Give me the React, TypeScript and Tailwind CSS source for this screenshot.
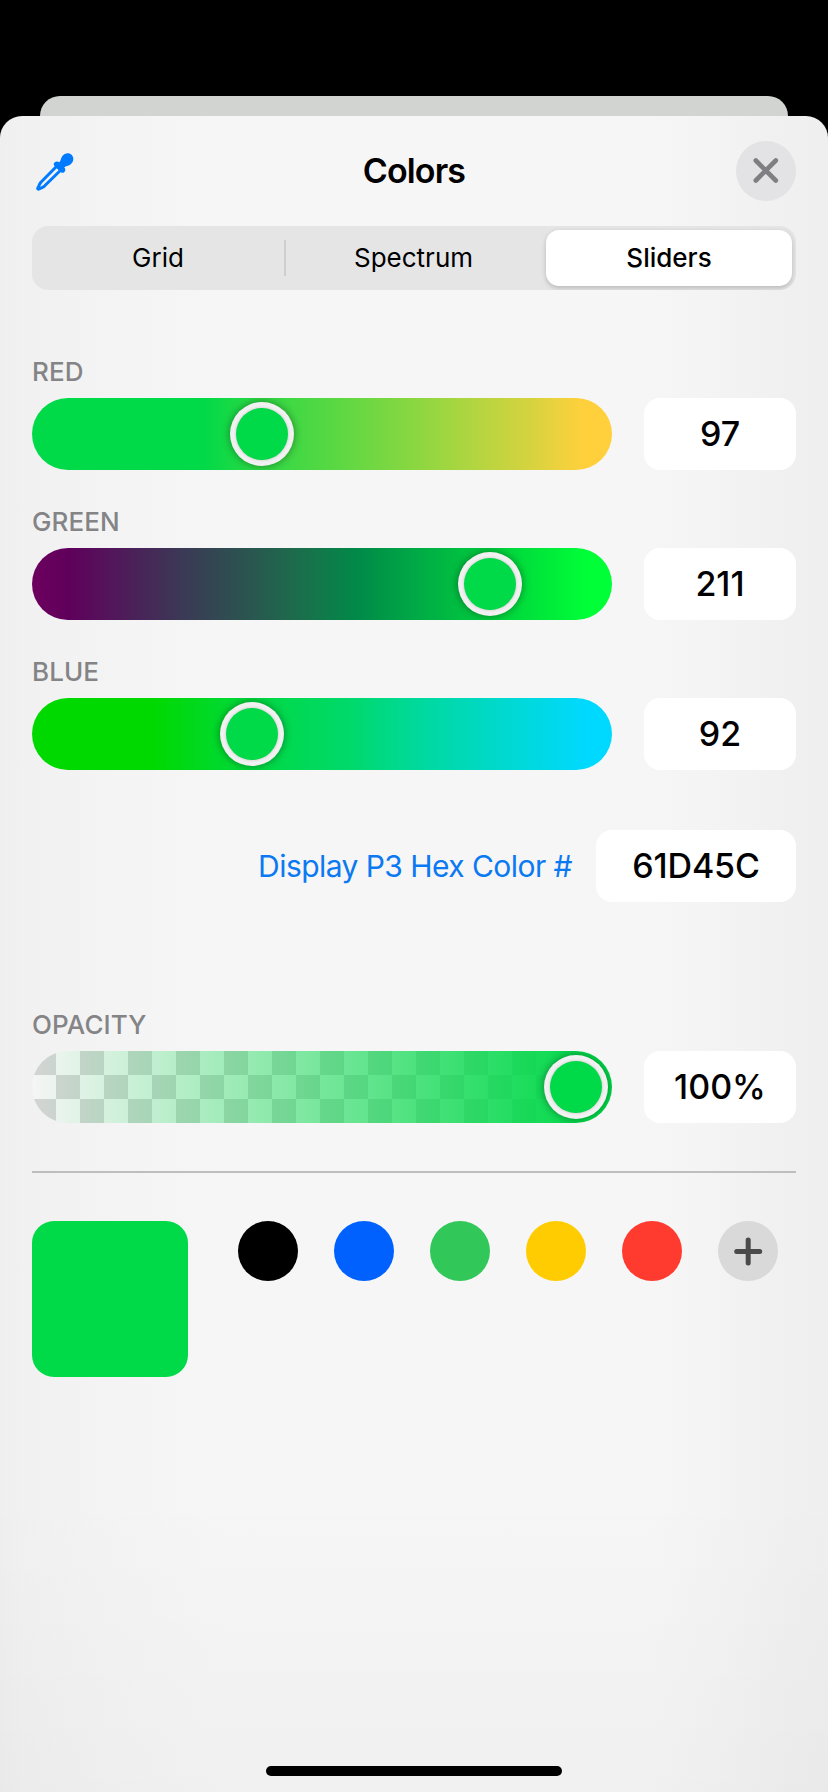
import type { ReactNode } from "react";

const swatches = ["bg-black", "bg-[#0061fe]", "bg-[#32c759]", "bg-[#ffcc02]", "bg-[#ff3b30]"];

function Label({ children }: { children: ReactNode }) {
  return <div className="h-[46px] pt-[4px] text-[26px] leading-[32px] font-medium tracking-[0.1px] text-[#848487]">{children}</div>;
}

function Value({ children }: { children: ReactNode }) {
  return (
    <div className="flex h-[72px] w-[152px] items-center justify-center rounded-[16px] bg-white text-[34px] leading-[40px] font-[450]">
      {children}
    </div>
  );
}

function Thumb({ left }: { left: number }) {
  return (
    <div
      className="absolute top-[4px] size-[64px] rounded-full bg-[#f1f1f1] p-[6px] shadow-[0_0_8px_rgba(0,0,0,0.4)]"
      style={{ left }}
    >
      <div className="size-full rounded-full bg-[#00d948] shadow-[0_0_3px_rgba(0,0,0,0.2)]" />
    </div>
  );
}

function ChannelRow({ label, track, thumb, value }: { label: string; track: string; thumb: number; value: ReactNode }) {
  return (
    <section>
      <Label>{label}</Label>
      <div className="flex justify-between">
        <div className={"relative h-[72px] w-[580px] overflow-hidden rounded-full " + track}>
          <Thumb left={thumb} />
        </div>
        <Value>{value}</Value>
      </div>
    </section>
  );
}

function Eyedropper() {
  return (
    <svg width="38" height="38" viewBox="0 0 38 38" fill="#007aff">
      <path d="M20.200 13.800 4.900 29.200C3.200 31.200 3.200 32.600 1.900 34.800c-.6.9.3 1.600 1.100 1.200 2.200-1.400 3.600-1.400 5.700-3.200L24.100 17.700" fill="none" stroke="#007aff" strokeWidth="3" strokeLinejoin="round" />
      <path d="M18.500 9.400c1.400-1.400 3.400-1.300 4.700-.1C24.800 8 24.700 5.600 26.200 3.200 28.800-.600 33.500-.600 35.600 1.800c2.500 2.500 2.400 7.200-1.200 9.600-2.400 1.600-4.600 1.400-6.100 2.800 1.200 1.300 1.500 3.300.1 4.700-1.200 1.200-3 1.100-4.200-.1l-5.500-5.500c-1.200-1.200-1.400-2.700-.2-3.900Z" />
    </svg>
  );
}

export default function App() {
  return (
    <div className="flex h-[1792px] w-[828px] flex-col bg-black pt-[96px] font-['Inter','Liberation_Sans',sans-serif] text-black">
      <div className="mx-[40px] h-[20px] shrink-0 rounded-t-[20px] bg-[#d2d4d1]" />
      <main className="flex min-h-0 flex-1 flex-col rounded-t-[22px] bg-[linear-gradient(to_bottom,transparent_82%,rgba(0,0,0,0.025)_100%),linear-gradient(to_right,#efeff0_0,#f1f1f1_22px,#f4f4f4_120px,#f6f6f6_220px,#f6f6f6_650px,#f3f3f3_730px,#f0f0f0_790px,#efefef_828px)] px-[32px] pt-[25px]">
        <header className="grid h-[60px] grid-cols-3 items-center">
          <div className="pt-[1px] pl-[4px]"><Eyedropper /></div>
          <h1 className="text-center text-[34px] leading-[40px] font-semibold tracking-[-0.850px]">Colors</h1>
          <button aria-label="Close" className="flex size-[60px] items-center justify-center justify-self-end rounded-full bg-[#e3e3e5]">
            <svg width="26" height="26" viewBox="0 0 26 26" stroke="#7f7f83" strokeWidth="4.600" strokeLinecap="round">
              <path d="m2.800 2.500 20 20m0-20-20 20" />
            </svg>
          </button>
        </header>

        <nav className="mt-[25px] flex h-[64px] shrink-0 items-center overflow-hidden rounded-[16px] bg-[#e5e5e6] p-[4px] text-[26px] leading-[32px]">
          <div className="w-[248px] pr-[4px] text-center">Grid</div>
          <div className="h-[36px] w-[2px] bg-[#cfcfd3]" />
          <div className="w-[260px] pr-[5px] text-center">Spectrum</div>
          <div className="flex h-[56px] w-[246px] items-center justify-center rounded-[13px] bg-white font-medium shadow-[0_2px_5px_rgba(0,0,0,0.2)]">
            Sliders
          </div>
        </nav>

        <div className="mt-[62px] flex flex-col gap-[32px]">
          <ChannelRow
            label="RED"
            thumb={198}
            value={97}
            track="bg-[linear-gradient(to_right,#00d948_0,#00d948_170px,#2cd945_225px,#55d843_295px,#86d741_376px,#b7d540_450px,#d6d33f_500px,#ecd23e_526px,#ffd03c_552px)]"
          />
          <ChannelRow
            label="GREEN"
            thumb={426}
            value={211}
            track="bg-[linear-gradient(to_right,#6d005f_0,#5f005b_36px,#55125b_72px,#462858_116px,#3a3b55_154px,#2c5250_210px,#1d6b4c_262px,#008b48_328px,#00a846_380px,#00c53f_440px,#00e33b_500px,#00ff37_555px)]"
          />
          <ChannelRow
            label="BLUE"
            thumb={188}
            value={92}
            track="bg-[linear-gradient(to_right,#00d900_0,#00d900_120px,#00d92a_185px,#00d950_255px,#00d96c_320px,#00d998_380px,#00d9c8_460px,#00d9e8_515px,#00d9ff_555px)]"
          />
        </div>

        <div className="mt-[60px] flex items-center justify-end gap-[24px]">
          <span className="text-[30px] leading-[36px] tracking-[-0.550px] text-[#0b79f2]">Display P3 Hex Color #</span>
          <div className="flex h-[72px] w-[200px] items-center justify-center rounded-[16px] bg-white text-[34px] leading-[40px] font-[450] tracking-[-0.100px]">61D45C</div>
        </div>

        <div className="mt-[103px]">
          <ChannelRow
            label="OPACITY"
            thumb={512}
            value="100%"
            track="bg-[linear-gradient(to_right,rgba(0,217,72,0)_0,rgba(0,217,72,1)_560px),repeating-conic-gradient(#f5f5f5_0_25%,#d4d4d4_0_50%)] bg-[length:auto,48px_48px]"
          />
        </div>

        <div className="mt-[48px] h-[2px] shrink-0 bg-[#bebebf]" />

        <div className="mt-[48px] flex items-start">
          <div className="mr-[50px] size-[156px] rounded-[22px] bg-[#00d948]" />
          <div className="flex gap-[36px]">
            {swatches.map((color) => (
              <div key={color} className={"size-[60px] rounded-full " + color} />
            ))}
            <button aria-label="Add color" className="flex size-[60px] items-center justify-center rounded-full bg-[#d9d9d9]">
              <svg width="30" height="30" viewBox="0 0 30 30" stroke="#4a4a4a" strokeWidth="5" strokeLinecap="round">
                <path d="M15.200 4v23M3.700 15.500h23" />
              </svg>
            </button>
          </div>
        </div>

        <div className="mt-auto mb-[16px] h-[10px] w-[296px] self-center rounded-full bg-black" />
      </main>
    </div>
  );
}
